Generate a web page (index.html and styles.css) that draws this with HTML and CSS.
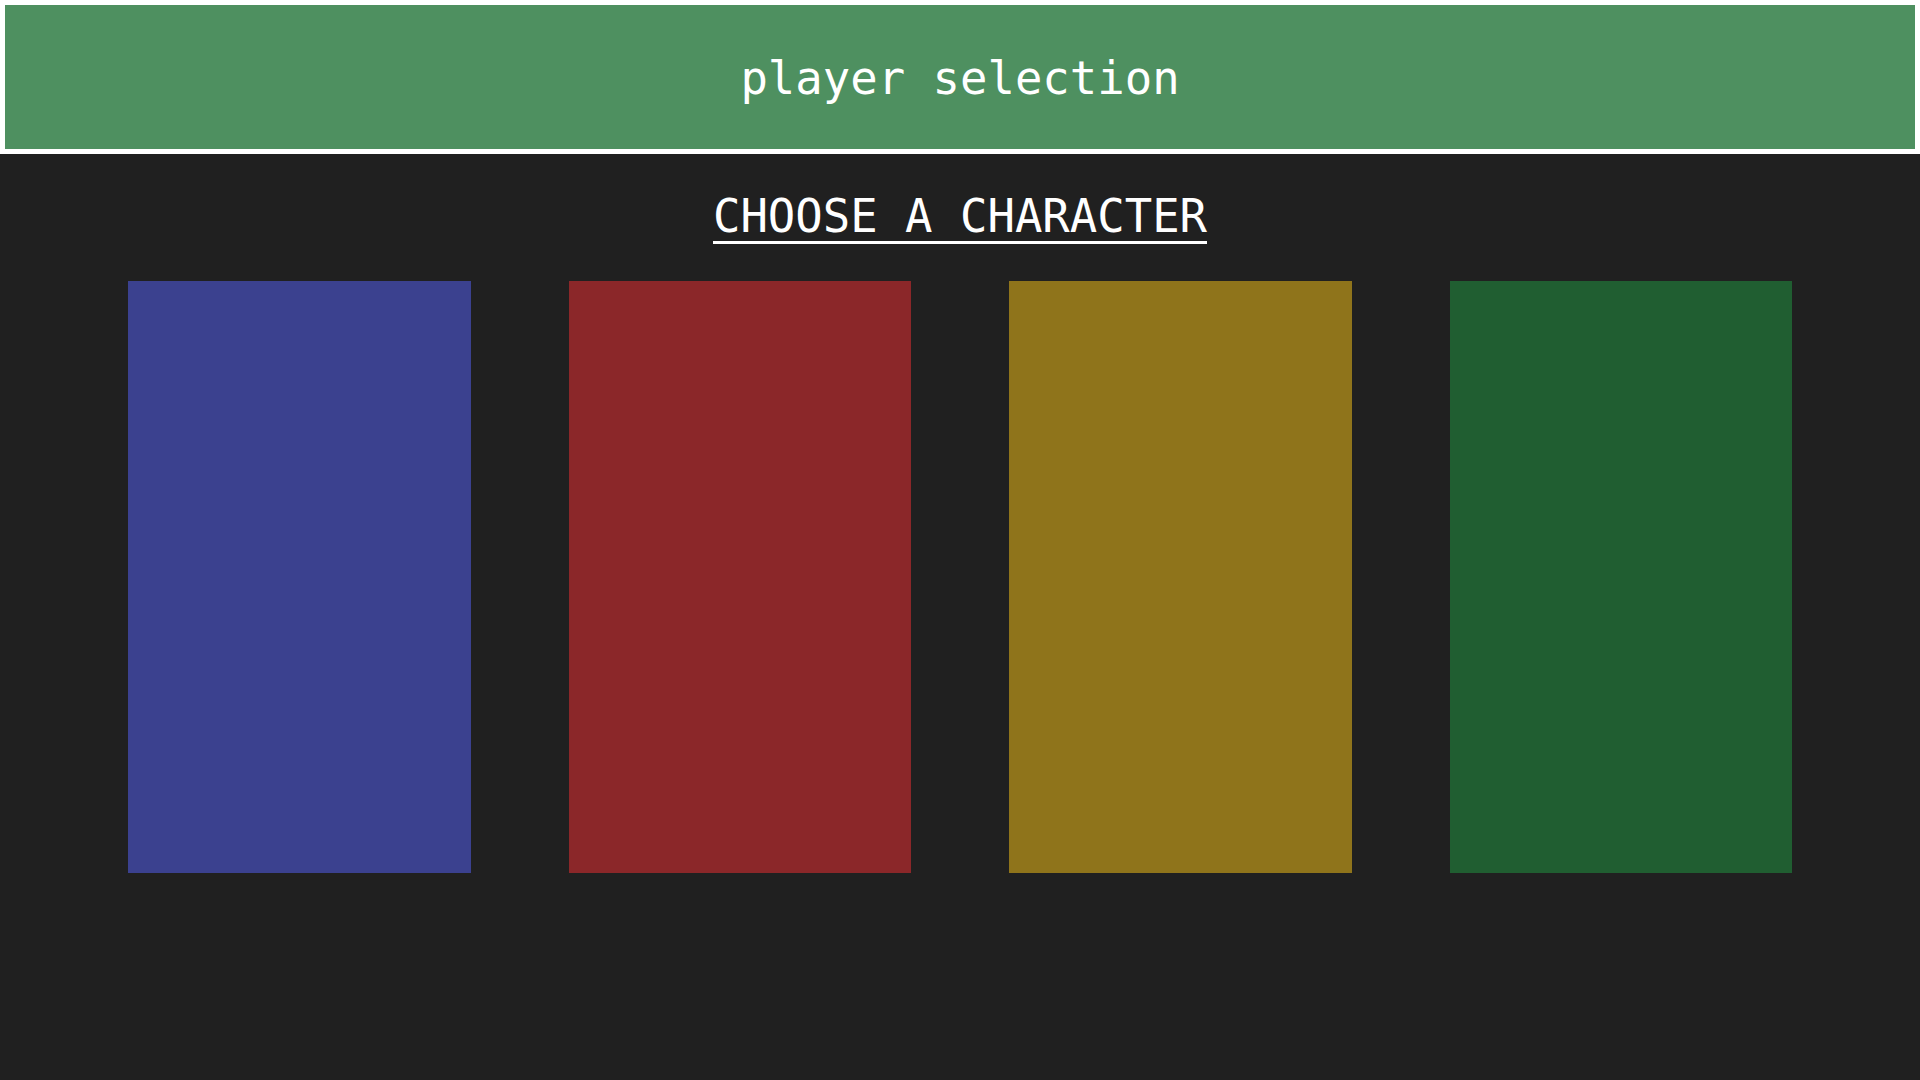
FILE: index.html
```html
<!DOCTYPE html>
<html>
<head>
<meta charset="utf-8">
<link rel="stylesheet" href="styles.css">
</head>
<body>
<header class="top-bar">
  <h1 class="top-title">player selection</h1>
</header>
<main class="select">
  <h2 class="select-title">CHOOSE A CHARACTER</h2>
  <div class="cards">
    <div class="card card-blue"></div>
    <div class="card card-red"></div>
    <div class="card card-gold"></div>
    <div class="card card-green"></div>
  </div>
</main>
</body>
</html>
```
FILE: styles.css
```css
html, body {
  margin: 0;
  padding: 0;
  height: 100%;
}
body {
  background: #202020;
  font-family: "DejaVu Sans Mono", monospace;
  color: #ffffff;
}
.top-bar {
  box-sizing: border-box;
  height: 154px;
  border: 5px solid #ffffff;
  padding-top: 4px;
  background: #4e9060;
  display: flex;
  align-items: center;
  justify-content: center;
}
.top-title {
  margin: 0;
  font-size: 45.6px;
  font-weight: normal;
  line-height: 1;
}
.select {
  display: flex;
  flex-direction: column;
  align-items: center;
}
.select-title {
  margin: 40px 0 0;
  font-size: 45.6px;
  font-weight: normal;
  line-height: 1;
  padding-bottom: 1px;
  border-bottom: 3px solid #ffffff;
}
.cards {
  align-self: stretch;
  display: grid;
  grid-template-columns: repeat(4, 1fr);
  gap: 98px;
  padding: 0 128px;
  margin-top: 37px;
}
.card {
  height: 592px;
}
.card-blue { background: #3b418f; }
.card-red { background: #8b2729; }
.card-gold { background: #8f741b; }
.card-green { background: #205e31; }
```
